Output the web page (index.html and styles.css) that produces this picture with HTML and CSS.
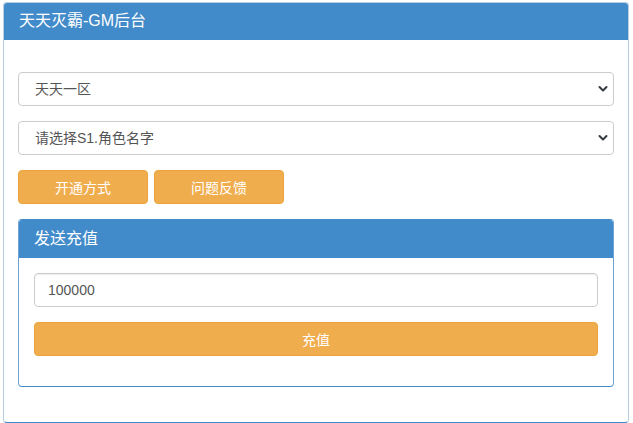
FILE: index.html
```html
<!DOCTYPE html>
<html lang="zh-CN">
<head>
<meta charset="utf-8">
<title>天天灭霸-GM后台</title>
<link rel="stylesheet" href="styles.css">
</head>
<body>
<div class="panel">
  <div class="panel-heading">天天灭霸-GM后台</div>
  <div class="panel-body">
    <div class="select-wrap">
      <select class="form-select"><option>天天一区</option></select>
      <svg class="chev" width="12" height="8" viewBox="0 0 12 8"><path d="M2.5 2l3.5 3.5 3.5-3.5" fill="none" stroke="#343a40" stroke-width="2" stroke-linecap="round" stroke-linejoin="round"/></svg>
    </div>
    <div class="select-wrap">
      <select class="form-select"><option>请选择S1.角色名字</option></select>
      <svg class="chev" width="12" height="8" viewBox="0 0 12 8"><path d="M2.5 2l3.5 3.5 3.5-3.5" fill="none" stroke="#343a40" stroke-width="2" stroke-linecap="round" stroke-linejoin="round"/></svg>
    </div>
    <div class="btn-row">
      <button class="btn btn-small">开通方式</button>
      <button class="btn btn-small">问题反馈</button>
    </div>
    <div class="panel inner">
      <div class="panel-heading inner-heading">发送充值</div>
      <div class="panel-body inner-body">
        <input class="form-input" type="text" value="100000">
        <button class="btn btn-block">充值</button>
      </div>
    </div>
  </div>
</div>
</body>
</html>
```
FILE: styles.css
```css
* { box-sizing: border-box; }
html, body { margin: 0; padding: 0; background: #fff; }
body {
  padding: 2px 4px 0 3px;
  font-family: "Liberation Sans", "Noto Sans CJK SC", sans-serif;
  font-size: 14px;
  color: #333;
}
.panel {
  border: 1px solid #b9cde2;
  border-bottom-color: #428bca;
  border-radius: 4px;
  background: #fff;
  overflow: hidden;
}
.panel-heading {
  background: #428bca;
  color: #fff;
  font-size: 16px;
  line-height: 20px;
  padding: 8px 15px 9px;
  height: 37px;
}
.inner-heading {
  height: 38px;
  padding-top: 9px;
}
.panel-body {
  padding: 32px 14px 35px 14px;
}
.select-wrap {
  position: relative;
  height: 34px;
  margin-bottom: 15px;
}
.form-select {
  display: block;
  width: 100%;
  height: 34px;
  padding: 0 36px 0 16px;
  font-family: inherit;
  font-size: 14px;
  color: #555;
  background: #fff;
  border: 1px solid #ccc;
  border-radius: 4px;
  appearance: none;
  -webkit-appearance: none;
}
.chev {
  position: absolute;
  right: 5px;
  top: 13px;
  pointer-events: none;
}
.btn-row {
  display: flex;
  gap: 6px;
  margin-bottom: 15px;
}
.btn {
  background: #f0ad4e;
  color: #fff;
  border: 1px solid #eea43d;
  border-radius: 4px;
  height: 34px;
  font-family: inherit;
  font-size: 14px;
  padding: 0;
}
.btn-small { width: 130px; }
.inner {
  border-color: #428bca;
  border-left-color: #6fa3d6;
  border-right-color: #6fa3d6;
}
.inner-body {
  padding: 15px 15px 30px 15px;
  display: flex;
  flex-direction: column;
  gap: 15px;
}
.form-input {
  display: block;
  width: 100%;
  height: 34px;
  padding: 0 13px;
  font-family: inherit;
  font-size: 14px;
  color: #555;
  border: 1px solid #ccc;
  border-radius: 4px;
  box-shadow: inset 0 1px 1px rgba(0,0,0,.075);
}
.btn-block { width: 100%; }
```
